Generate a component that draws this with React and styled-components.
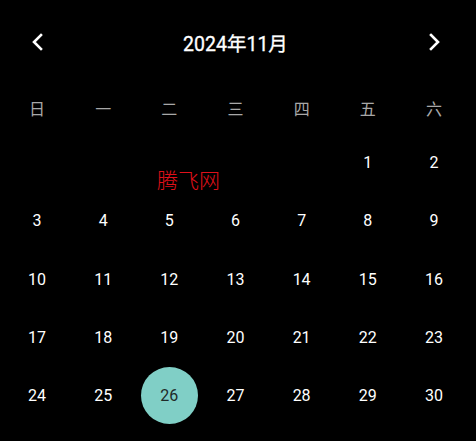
import React from 'react';
import styled, { createGlobalStyle } from 'styled-components';

const GlobalStyle = createGlobalStyle`
  html, body {
    margin: 0;
    padding: 0;
    background: #000;
  }
  body {
    font-family: Roboto, "Noto Sans CJK SC", sans-serif;
  }
`;

const WEEKDAYS = ['日', '一', '二', '三', '四', '五', '六'];

const buildDays = () => {
  // 2024年11月 starts on Friday (index 5)
  const cells = [];
  for (let i = 0; i < 5; i++) cells.push(null);
  for (let d = 1; d <= 30; d++) cells.push(d);
  return cells;
};

const Chevron = ({ dir }) => (
  <svg width="14" height="18" viewBox="0 0 14 18">
    <polyline
      points={dir === 'left' ? '10,2 3,9 10,16' : '4,2 11,9 4,16'}
      fill="none"
      stroke="#fff"
      strokeWidth="2.6"
      strokeLinecap="square"
      strokeLinejoin="miter"
    />
  </svg>
);

const App = () => {
  const days = buildDays();
  const selected = 26;

  return (
    <>
      <GlobalStyle />
      <Page>
        <Header>
          <NavButton>
            <Chevron dir="left" />
          </NavButton>
          <Title>2024年11月</Title>
          <NavButton>
            <Chevron dir="right" />
          </NavButton>
        </Header>
        <WeekRow>
          {WEEKDAYS.map((w) => (
            <WeekCell key={w}>{w}</WeekCell>
          ))}
        </WeekRow>
        <DayGrid>
          {days.map((d, i) => (
            <DayCell key={i}>
              {d && <DayNum $active={d === selected}>{d}</DayNum>}
            </DayCell>
          ))}
          <Watermark>腾飞网</Watermark>
        </DayGrid>
      </Page>
    </>
  );
};

export default App;

const Page = styled.div`
  width: 476px;
  height: 441px;
  box-sizing: border-box;
  padding: 13px 9px 0 4px;
  overflow: hidden;
  background: #000;
`;

const Header = styled.div`
  height: 58px;
  display: grid;
  grid-template-columns: repeat(7, 1fr);
  align-items: center;
`;

const NavButton = styled.div`
  display: flex;
  justify-content: center;
  align-items: center;
  padding-left: 2px;
  &:last-child {
    grid-column: 7;
    padding-left: 0;
  }
`;

const Title = styled.div`
  grid-column: 2 / 7;
  text-align: center;
  color: #fff;
  font-size: 19.5px;
  font-weight: 400;
  padding-top: 1px;
  -webkit-text-stroke: 0.3px #fff;
`;

const WeekRow = styled.div`
  margin-top: 12px;
  height: 50px;
  display: grid;
  grid-template-columns: repeat(7, 1fr);
  align-items: center;
`;

const WeekCell = styled.div`
  text-align: center;
  color: #a8a8a8;
  font-family: "Noto Sans CJK SC", sans-serif;
  font-size: 16px;
  font-weight: 400;
`;

const DayGrid = styled.div`
  position: relative;
  display: grid;
  grid-template-columns: repeat(7, 1fr);
  grid-auto-rows: 58.25px;
`;

const DayCell = styled.div`
  display: flex;
  justify-content: center;
  align-items: center;
`;

const DayNum = styled.div`
  width: 57px;
  height: 57px;
  border-radius: 50%;
  display: flex;
  justify-content: center;
  align-items: center;
  font-size: 16px;
  padding-top: 1px;
  box-sizing: border-box;
  color: ${(p) => (p.$active ? '#1f2a28' : '#fff')};
  background: ${(p) => (p.$active ? '#80cfc6' : 'transparent')};
`;

const Watermark = styled.div`
  position: absolute;
  left: 153px;
  top: 31px;
  color: #e0101a;
  font-family: "Noto Sans CJK SC", sans-serif;
  font-size: 21px;
  font-weight: 300;
  pointer-events: none;
`;
